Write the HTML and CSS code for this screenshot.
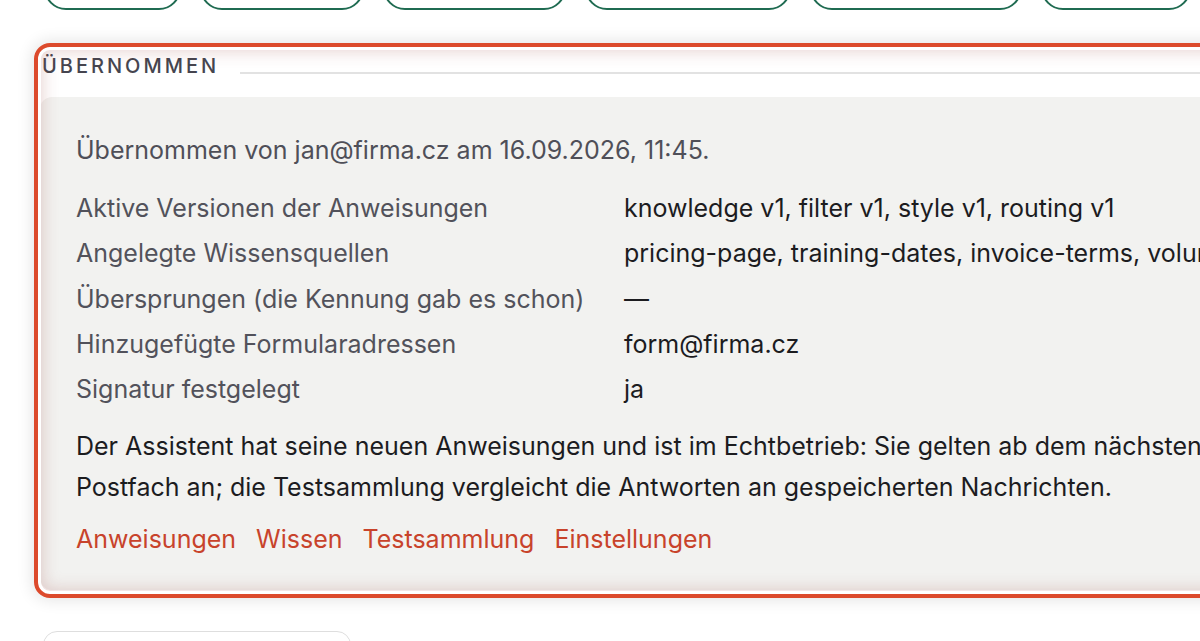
FILE: index.html
```html
<!DOCTYPE html>
<html lang="de">
<head>
<meta charset="utf-8">
<title>Übernommen</title>
<link rel="stylesheet" href="styles.css">
</head>
<body>
<div class="page">
  <nav class="tabs">
    <span class="tab tab-1"></span>
    <span class="tab tab-2"></span>
    <span class="tab tab-3"></span>
    <span class="tab tab-4"></span>
    <span class="tab tab-5"></span>
    <span class="tab tab-6"></span>
  </nav>

  <section class="card">
    <div class="card-head">
      <h2 class="legend">Übernommen</h2>
      <span class="rule"></span>
    </div>
    <div class="panel">
      <p class="intro">Übernommen von jan@firma.cz am 16.09.2026, 11:45.</p>
      <dl class="facts">
        <dt>Aktive Versionen der Anweisungen</dt>
        <dd>knowledge v1, filter v1, style v1, routing v1</dd>
        <dt>Angelegte Wissensquellen</dt>
        <dd>pricing-page, training-dates, invoice-terms, volume-discounts</dd>
        <dt>Übersprungen (die Kennung gab es schon)</dt>
        <dd>—</dd>
        <dt>Hinzugefügte Formularadressen</dt>
        <dd>form@firma.cz</dd>
        <dt>Signatur festgelegt</dt>
        <dd>ja</dd>
      </dl>
      <p class="note">Der Assistent hat seine neuen Anweisungen und ist im Echtbetrieb: Sie gelten ab dem nächsten Eingang im<br>Postfach an; die Testsammlung vergleicht die Antworten an gespeicherten Nachrichten.</p>
      <div class="links">
        <a href="#">Anweisungen</a>
        <a href="#">Wissen</a>
        <a href="#">Testsammlung</a>
        <a href="#">Einstellungen</a>
      </div>
    </div>
  </section>

  <div class="next-card"></div>
</div>
</body>
</html>
```

FILE: styles.css
```css
html, body {
  margin: 0;
  padding: 0;
  background: #ffffff;
  overflow: hidden;
}

body {
  font-family: "Inter", "Noto Sans", sans-serif;
  color: #1c1c1f;
  width: 1200px;
  height: 641px;
}

.page {
  display: flex;
  flex-direction: column;
  gap: 33px;
  padding-left: 34px;
  margin-top: -34px;
}

/* top tab row (mostly scrolled out of view) */
.tabs {
  display: flex;
  gap: 19px;
  margin-left: 10px;
}

.tab {
  box-sizing: border-box;
  height: 44px;
  border: 2px solid #1f6b51;
  border-radius: 22px;
  background: #fff;
  flex: none;
}

.tab-1 { width: 137px; }
.tab-2 { width: 164px; }
.tab-3 { width: 183px; }
.tab-4 { width: 206px; }
.tab-5 { width: 212px; }
.tab-6 { width: 150px; }

/* highlighted card */
.card {
  position: relative;
  width: 1400px;
  box-sizing: border-box;
  padding: 9px 0 8px 6px;
  background: #fff;
  border-radius: 16px;
}

.card::after {
  content: "";
  position: absolute;
  inset: 0;
  border: 4px solid #dc4a2c;
  border-radius: 16px;
  pointer-events: none;
  box-shadow:
    0 0 16px 2px rgba(0, 0, 0, 0.11),
    inset 0 0 0 3px #ffffff,
    inset 0 0 16px 5px rgba(165, 80, 75, 0.24);
}

.card-head {
  display: flex;
  align-items: flex-start;
  gap: 21px;
  height: 28px;
}

.legend {
  margin: 0 0 0 2px;
  font-size: 20px;
  line-height: 28px;
  font-weight: 500;
  letter-spacing: 0.15em;
  text-transform: uppercase;
  color: #45454f;
  white-space: nowrap;
}

.rule {
  flex: 1;
  margin-top: 20px;
  border-top: 2px solid #e2e2e2;
}

.panel {
  margin-top: 17px;
  background: #f2f2f0;
  border-radius: 12px 0 0 12px;
  padding: 35px 36px 33px;
  font-size: 25px;
}

.intro {
  margin: 0 0 22px;
  line-height: 36px;
  color: #4f4f58;
  white-space: nowrap;
}

.facts {
  display: grid;
  grid-template-columns: 548px 1fr;
  row-gap: 9.25px;
  margin: 0;
  line-height: 36px;
}

.facts dt {
  color: #52525b;
  white-space: nowrap;
}

.facts dd {
  margin: 0;
  color: #1c1c1f;
  white-space: nowrap;
}

.note {
  margin: 18.5px 0 0;
  line-height: 41px;
  color: #1c1c1f;
  white-space: nowrap;
}

.links {
  display: flex;
  gap: 20px;
  margin-top: 13.5px;
  line-height: 36px;
}

.links a {
  color: #c8432b;
  text-decoration: none;
}

.next-card {
  margin-left: 9px;
  width: 306px;
  height: 120px;
  border: 1.5px solid #dedede;
  border-radius: 14px;
  background: #fff;
}
```
